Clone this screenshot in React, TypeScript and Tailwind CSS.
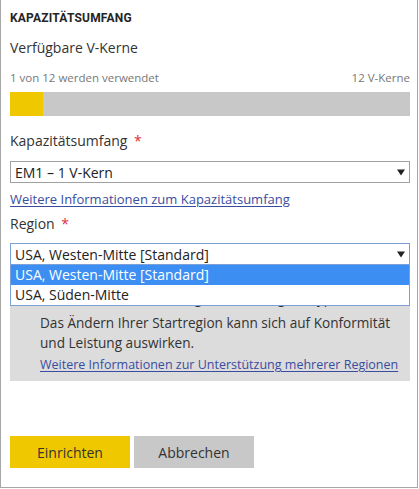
const FONT = "font-['Open_Sans','Noto_Sans',sans-serif]"

function Arrow() {
  return (
    <svg width="8" height="7" viewBox="0 0 8 7" className="shrink-0">
      <path d="M0 0.5 H8 L4 6.5 Z" fill="#222" />
    </svg>
  )
}

function Label({ text }: { text: string }) {
  return (
    <div className="h-[20px] leading-[20px] text-[14px] text-[#333]">
      {text} <span className="text-[#e0303a] ml-[3px]">*</span>
    </div>
  )
}

export default function App() {
  return (
    <div className={`${FONT} w-[418px] h-[488px] border-x border-b border-[#a6a6a6] bg-white`}>
      <div className="ml-[9px] w-[400px]">
        <div className="pt-[8px] h-[28px] leading-[20px] text-[12px] font-bold tracking-[0.2px] text-[#252525] font-['Roboto',sans-serif]">
          KAPAZITÄTSUMFANG
        </div>
        <div className="mt-[10px] h-[20px] leading-[20px] text-[14px] text-[#333]">Verfügbare V-Kerne</div>
        <div className="mt-[10px] h-[20px] leading-[20px] text-[11.5px] text-[#777] flex justify-between">
          <span>1 von 12 werden verwendet</span>
          <span>12 V-Kerne</span>
        </div>
        <div className="mt-[4px] h-[24px] bg-[#c8c8c8] flex">
          <div className="w-[33px] bg-[#f0c800]" />
        </div>

        <div className="mt-[15px]">
          <Label text="Kapazitätsumfang" />
        </div>
        <div className="mt-[10px] h-[22px] border border-[#a0a0a0] flex items-center justify-between pl-[4px] pr-[4px] text-[14px] text-[#222]">
          <span>EM1 – 1 V-Kern</span>
          <Arrow />
        </div>
        <div className="mt-[6px] h-[20px] leading-[20px] text-[13px]">
          <a className="text-[#3a4ca0] underline underline-offset-2">Weitere Informationen zum Kapazitätsumfang</a>
        </div>
        <div className="mt-[5px]">
          <Label text="Region" />
        </div>

        <div className="relative mt-[9px]">
          <div className="h-[22px] border border-[#7c9fd8] flex items-center justify-between pl-[4px] pr-[4px] text-[14px] text-[#222]">
            <span>USA, Westen-Mitte [Standard]</span>
            <Arrow />
          </div>
          <div className="absolute left-0 top-[22px] w-[400px] z-10 bg-white border border-t-0 border-[#7c9fd8] text-[14px]">
            <div className="h-[20px] leading-[20px] pl-[4px] bg-[#3c8ef3] text-white">USA, Westen-Mitte [Standard]</div>
            <div className="h-[20px] leading-[20px] pl-[4px] text-[#222]">USA, Süden-Mitte</div>
          </div>
        </div>

        <div className="mt-[6px] bg-[#dcdcdc] pl-[30px] pt-[17px] pb-[6px] text-[13.6px] leading-[20px] text-[#333] whitespace-nowrap">
          <div className="h-[25px]">Ihre Daten (Standard) liegen in der Region, typisch.</div>
          <div>Das Ändern Ihrer Startregion kann sich auf Konformität</div>
          <div>und Leistung auswirken.</div>
          <div className="mt-[2px] text-[12.5px]">
            <a className="text-[#3a4ca0] underline underline-offset-2">Weitere Informationen zur Unterstützung mehrerer Regionen</a>
          </div>
        </div>

        <div className="mt-[55px] flex gap-[4px]">
          <button className="w-[120px] h-[32px] bg-[#f0c800] text-[14px] text-[#333]">Einrichten</button>
          <button className="w-[120px] h-[32px] bg-[#c8c8c8] text-[14px] text-[#333]">Abbrechen</button>
        </div>
      </div>
    </div>
  )
}
